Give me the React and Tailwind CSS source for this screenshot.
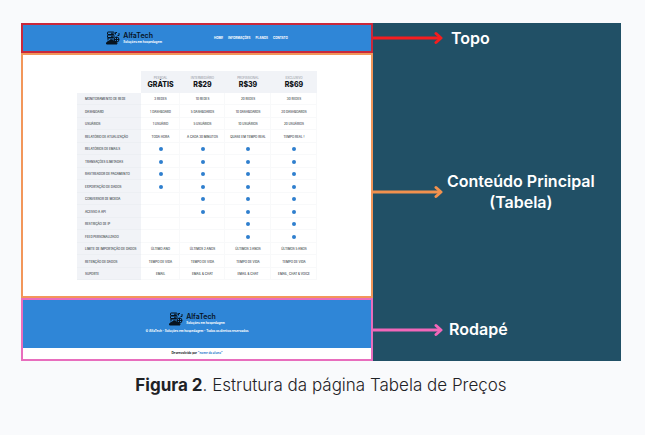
import React from "react";

const plans = [
  { tag: "PESSOAL", price: "GRÁTIS" },
  { tag: "INTERMEDIÁRIO", price: "R$29" },
  { tag: "PROFISSIONAL", price: "R$39" },
  { tag: "EXCLUSIVO", price: "R$69" },
];

const rows = [
  ["MONITORAMENTO DE REDE", "3 REDES", "10 REDES", "20 REDES", "30 REDES"],
  ["DASHBOARD", "1 DASHBOARD", "5 DASHBOARDS", "10 DASHBOARDS", "20 DASHBOARDS"],
  ["USUÁRIOS", "1 USUÁRIO", "5 USUÁRIOS", "10 USUÁRIOS", "20 USUÁRIOS"],
  ["RELATÓRIO DE ATUALIZAÇÃO", "TODA HORA", "A CADA 30 MINUTOS", "QUASE EM TEMPO REAL", "TEMPO REAL !"],
  ["RELATÓRIOS DE EMAILS", true, true, true, true],
  ["TRANSAÇÕES ILIMITADAS", true, true, true, true],
  ["RASTREADOR DE PAGAMENTO", true, true, true, true],
  ["EXPORTAÇÃO DE DADOS", true, true, true, true],
  ["CONVERSOR DE MOEDA", false, true, true, true],
  ["ACESSO A API", false, true, true, true],
  ["RESTRIÇÃO DE IP", false, false, true, true],
  ["FEED PERSONALIZADO", false, false, true, true],
  ["LIMITE DE IMPORTAÇÃO DE DADOS", "ÚLTIMO ANO", "ÚLTIMOS 2 ANOS", "ÚLTIMOS 3 ANOS", "ÚLTIMOS 5 ANOS"],
  ["RETENÇÃO DE DADOS", "TEMPO DE VIDA", "TEMPO DE VIDA", "TEMPO DE VIDA", "TEMPO DE VIDA"],
  ["SUPORTE", "EMAIL", "EMAIL & CHAT", "EMAIL & CHAT", "EMAIL, CHAT & VOICE"],
];

function Logo() {
  return (
    <div className="flex items-center gap-[3px]">
      <svg viewBox="0 0 28 28" className="size-3.5 shrink-0" fill="none" stroke="#07131f" strokeWidth="2" aria-hidden="true">
        <rect x="3" y="2" width="13" height="5" rx="1" />
        <rect x="3" y="8" width="13" height="5" rx="1" />
        <path d="M3 14h12M4 14v5M19 7V3h3M23 9h3V4M10 4.500h4M10 10.500h4" />
        <circle cx="21" cy="17" r="5" />
        <path d="M16 17h10M21 12v10" />
        <path d="M1 26c0-4 2-5 5-5 1-4 7-5 9-1 4-1 7 2 7 6z" fill="#07131f" />
      </svg>
      <div className="flex flex-col">
        <strong className="text-[7px] leading-[8px] font-semibold text-[#07131f]">AlfaTech</strong>
        <span className="text-[3px] leading-[5px] font-bold text-white">Soluções em hospedagem</span>
      </div>
    </div>
  );
}

function Arrow() {
  return (
    <svg viewBox="0 0 70 14" className="h-3.5 w-[70px] shrink-0" fill="none" stroke="currentColor" strokeWidth="3" aria-hidden="true">
      <path d="M0 7H68" />
      <path d="M63 2.500L68 7L63 11.500" strokeLinecap="round" strokeLinejoin="round" />
    </svg>
  );
}

function PricingTable() {
  return (
    <table className="mx-auto w-[240px] table-fixed border-collapse text-center text-[3px] leading-[4px] text-[#333a42]">
      <colgroup>
        <col className="w-16" />
        <col className="w-[39px]" />
        <col className="w-[45px]" />
        <col className="w-[46px]" />
        <col className="w-[46px]" />
      </colgroup>
      <thead>
        <tr className="h-[22px]">
          <td />
          {plans.map((p) => (
            <th key={p.price} scope="col" className="bg-[#f1f3f7] p-0 align-middle">
              <span className="block font-normal text-[#8b9098]">{p.tag}</span>
              <span className="block text-[7px] leading-[9px] font-extrabold text-[#101318]">{p.price}</span>
            </th>
          ))}
        </tr>
      </thead>
      <tbody>
        {rows.map(([label, ...cells]) => (
          <tr key={label} className="odd:h-3 even:h-[13px]">
            <th scope="row" className="bg-[#f1f3f7] py-0 pr-0 pl-2 text-left font-medium whitespace-nowrap shadow-[inset_0_-1px_#eceff3]">
              {label}
            </th>
            {cells.map((c, i) => (
              <td key={i} className="p-0 font-medium whitespace-nowrap shadow-[inset_-1px_-1px_#f8f9fa]">
                {c === true ? (
                  <span role="img" aria-label="Incluído" className="mx-auto block size-1 rounded-full bg-[#2f7fce]" />
                ) : (
                  c || null
                )}
              </td>
            ))}
          </tr>
        ))}
      </tbody>
    </table>
  );
}

export default function App() {
  return (
    <main className="min-h-screen bg-[#f9fafc] py-[23px] pr-6 pl-[21px] font-['Inter','Liberation_Sans',sans-serif]">
      <figure>
        <div className="bg-[#215066] text-[16px] leading-[21px] font-semibold text-white">
          <section className="grid grid-cols-[352fr_248fr]">
            <header className="flex h-[30px] items-center justify-center gap-[52px] border-2 border-[#c9283b] bg-[#2f86d7]">
              <Logo />
              <nav className="flex gap-[5px] text-[3px] leading-[4px] font-bold">
                <a href="#home">HOME</a>
                <a href="#informacoes">INFORMAÇÕES</a>
                <a href="#planos">PLANOS</a>
                <a href="#contato">CONTATO</a>
              </nav>
            </header>
            <div className="flex items-center gap-2 text-[#f51d1f]">
              <Arrow />
              <p className="text-white">Topo</p>
            </div>
          </section>

          <section className="grid grid-cols-[352fr_248fr]">
            <div className="border-2 border-[#f2965a] bg-white py-4">
              <PricingTable />
            </div>
            <div className="flex items-center gap-1 pt-8 text-[#f2914e]">
              <Arrow />
              <p className="text-center whitespace-nowrap text-white">
                Conteúdo Principal
                <br />
                (Tabela)
              </p>
            </div>
          </section>

          <section className="grid grid-cols-[352fr_248fr]">
            <footer className="border-2 border-[#e86dbd] bg-white">
              <div className="flex h-12 flex-col items-center gap-[3px] bg-[#2f86d7] pt-3">
                <Logo />
                <p className="text-[3px] leading-[4px] font-bold">© AlfaTech - Soluções em hospedagem - Todos os direitos reservados</p>
              </div>
              <p className="py-[3px] text-center text-[3px] leading-[5px] font-bold text-[#16191d]">
                Desenvolvido por <a href="#aluno" className="text-[#2f7fce]">"nome do aluno"</a>
              </p>
            </footer>
            <div className="flex items-center gap-1.5 text-[#f267b9]">
              <Arrow />
              <p className="text-white">Rodapé</p>
            </div>
          </section>
        </div>
        <figcaption className="pt-[13px] text-center text-[17px] leading-[22px] font-light text-[#1f2226]">
          <b className="font-bold">Figura 2</b>. Estrutura da página Tabela de Preços
        </figcaption>
      </figure>
    </main>
  );
}
